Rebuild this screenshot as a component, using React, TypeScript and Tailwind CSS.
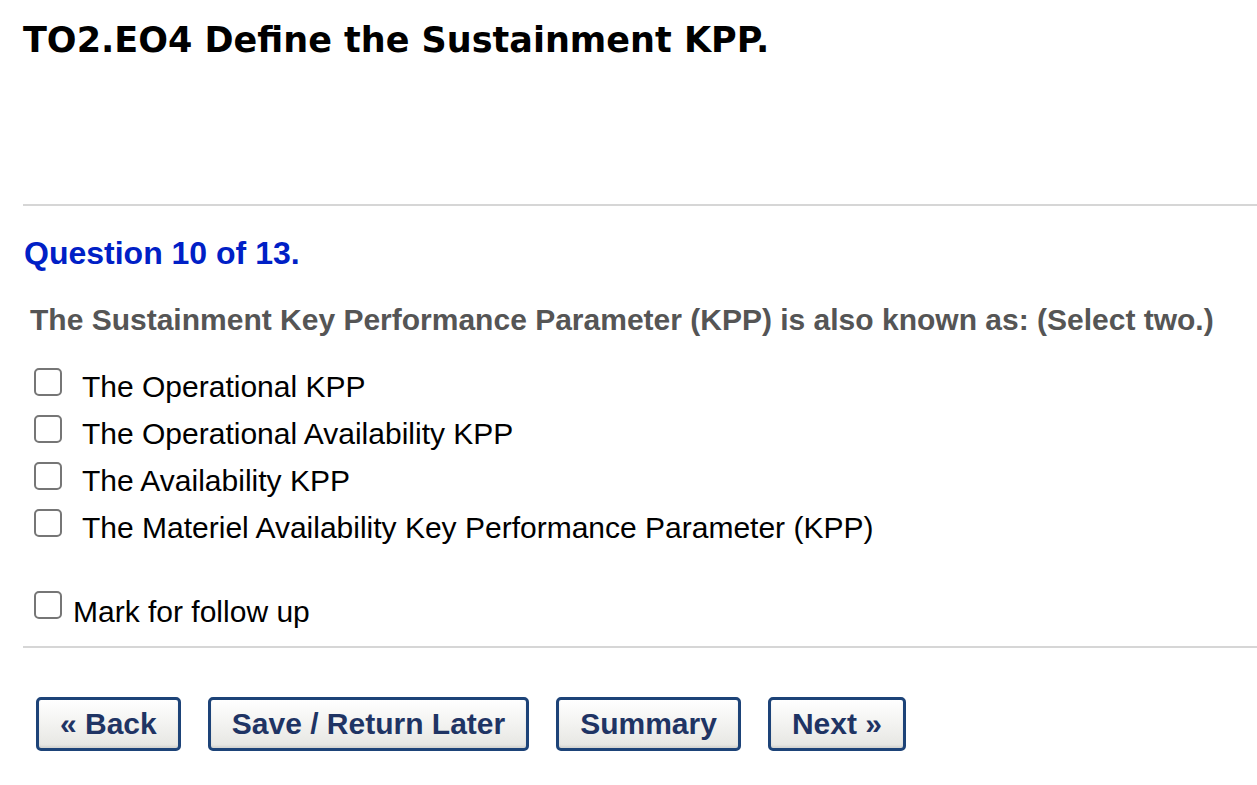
export default function App() {
  const options = [
    "The Operational KPP",
    "The Operational Availability KPP",
    "The Availability KPP",
    "The Materiel Availability Key Performance Parameter (KPP)",
  ];

  return (
    <div className="min-h-[785px] w-full bg-white text-black" style={{ fontFamily: '"Liberation Sans", Arial, sans-serif' }}>
      <div className="pl-[23px]">
        <h1 className="pt-[17px] text-[35px] font-bold leading-[46px] text-black" style={{ fontFamily: '"DejaVu Sans", Verdana, sans-serif' }}>
          TO2.EO4 Define the Sustainment KPP.
        </h1>

        <div className="mt-[141px] border-t-2 border-[#d6d6d6]" />

        <h2 className="mt-[29px] pl-[1px] text-[32px] font-bold leading-[36px] text-[#0020c6]">Question 10 of 13.</h2>

        <p className="mt-[32px] pl-[7px] text-[30px] font-bold leading-[34px] text-[#555555]">
          The Sustainment Key Performance Parameter (KPP) is also known as: (Select two.)
        </p>

        <div className="mt-[26px] flex flex-col">
          {options.map((o) => (
            <label key={o} className="flex h-[47px] items-center pl-[11px]">
              <span className="h-[28px] w-[28px] shrink-0 -translate-y-[5px] rounded-[5px] border-2 border-[#767676] bg-white" />
              <span className="ml-[20px] text-[30px] leading-[32px]">{o}</span>
            </label>
          ))}
        </div>

        <label className="mt-[45px] flex h-[32px] items-center pl-[11px]">
          <span className="h-[28px] w-[28px] shrink-0 -translate-y-[7px] rounded-[5px] border-2 border-[#767676] bg-white" />
          <span className="ml-[11px] text-[30px] leading-[32px]">Mark for follow up</span>
        </label>

        <div className="mt-[18px] border-t-2 border-[#d6d6d6]" />

        <div className="mt-[49px] flex gap-[27px] pl-[13px]">
          {["« Back", "Save / Return Later", "Summary", "Next »"].map((b) => (
            <button
              key={b}
              className="h-[54px] rounded-[5px] border-[3px] border-[#1d4378] bg-gradient-to-b from-white to-[#e6e6e2] px-[21px] text-[30px] font-bold leading-none text-[#1f3464] shadow-[inset_0_-2px_2px_rgba(0,0,0,0.08)]"
            >
              {b}
            </button>
          ))}
        </div>
      </div>
    </div>
  );
}
